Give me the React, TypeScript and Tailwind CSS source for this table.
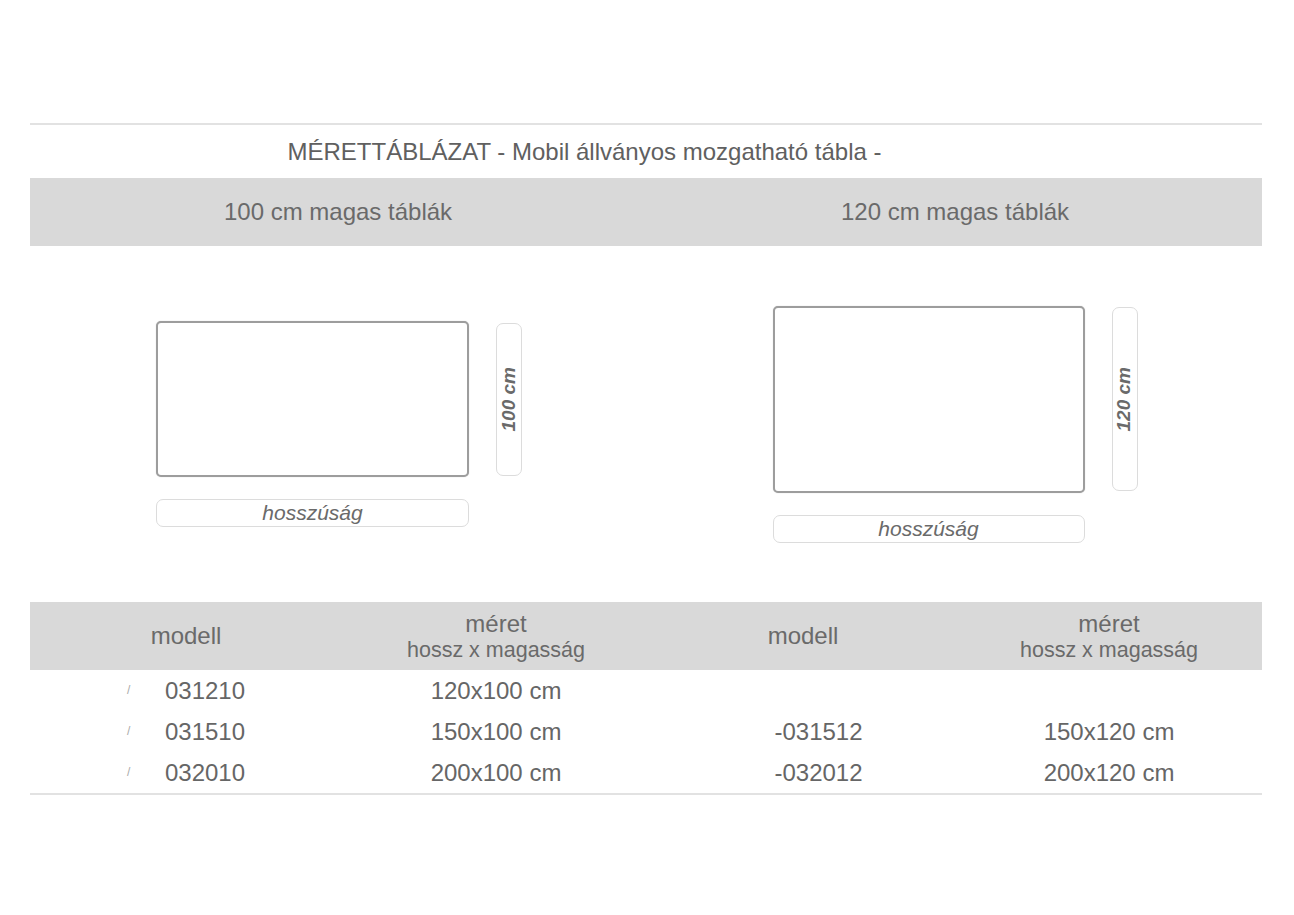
import React from 'react';

const font = "font-['Liberation_Sans',Arial,sans-serif]";

function Board({ w, h, label }: { w: number; h: number; label: string }) {
    return (
        <div className="flex flex-col items-start gap-[22px]">
            <div className="flex items-center gap-[27px]">
                <div
                    className="rounded-[5px] border-2 border-[#9d9d9d] bg-white shadow-[0_0_1px_rgba(0,0,0,0.25)]"
                    style={{ width: w, height: h }}
                />
                <div
                    className="flex w-[26px] items-center justify-center rounded-[7px] border border-[#dcdcdc]"
                    style={{ height: h - 3 }}
                >
                    <span className="rotate-180 text-[19px] font-bold italic text-[#6a6a6a] [writing-mode:vertical-rl]">{label}</span>
                </div>
            </div>
            <div
                className="flex h-[28px] items-center justify-center rounded-[7px] border border-[#dcdcdc] text-[21px] italic text-[#6a6a6a]"
                style={{ width: w }}
            >
                hosszúság
            </div>
        </div>
    );
}

const rows = [
    { a: '031210', b: '120x100 cm', c: '', d: '' },
    { a: '031510', b: '150x100 cm', c: '-031512', d: '150x120 cm' },
    { a: '032010', b: '200x100 cm', c: '-032012', d: '200x120 cm' },
];

export default function App() {
    return (
        <div className={`min-h-[915px] bg-white px-[30px] pt-[123px] text-[#666] ${font}`}>
            <div className="w-[1232px] border-t-2 border-b-2 border-[#e2e2e2]">
                <div className="flex h-[53px] items-center justify-center pr-[8px] text-[24px] text-[#606060]">
                    MÉRETTÁBLÁZAT - Mobil állványos mozgatható tábla - <span className="inline-block w-[115px]" />
                </div>

                <div className="grid h-[68px] grid-cols-2 bg-[#d9d9d9] text-[24px] text-[#6a6a6a]">
                    <div className="flex items-center justify-center">100 cm magas táblák</div>
                    <div className="flex items-center justify-center pl-[2px]">120 cm magas táblák</div>
                </div>

                <div className="grid h-[356px] grid-cols-2">
                    <div className="flex items-center justify-center pl-[2px]">
                        <Board w={313} h={156} label="100 cm" />
                    </div>
                    <div className="flex items-center justify-center pl-[2px]">
                        <Board w={312} h={187} label="120 cm" />
                    </div>
                </div>

                <div className="grid grid-cols-[312px_308px_306px_306px]">
                    <div className="flex h-[68px] items-center justify-center bg-[#d9d9d9] text-[24px] text-[#6a6a6a]">modell</div>
                    <div className="flex h-[68px] flex-col items-center justify-center bg-[#d9d9d9] pt-[2px] text-[#6a6a6a]">
                        <span className="text-[24px] leading-[26px]">méret</span>
                        <span className="text-[21.5px] leading-[26px]">hossz x magasság</span>
                    </div>
                    <div className="flex h-[68px] items-center justify-center bg-[#d9d9d9] text-[24px] text-[#6a6a6a]">modell</div>
                    <div className="flex h-[68px] flex-col items-center justify-center bg-[#d9d9d9] pt-[2px] text-[#6a6a6a]">
                        <span className="text-[24px] leading-[26px]">méret</span>
                        <span className="text-[21.5px] leading-[26px]">hossz x magasság</span>
                    </div>

                    {rows.map((r, i) => (
                        <React.Fragment key={i}>
                            <div className="flex h-[41px] items-center justify-center text-[24px]">
                                <span className="inline-flex w-[38px] items-end pb-[2px] text-[12px] text-[#aaa]">/</span>
                                {r.a}
                            </div>
                            <div className="flex h-[41px] items-center justify-center text-[24px]">{r.b}</div>
                            <div className="flex h-[41px] items-center justify-center text-[24px]">
                                {r.c && <span className="inline-block w-[31px]" />}
                                {r.c}
                            </div>
                            <div className="flex h-[41px] items-center justify-center text-[24px]">{r.d}</div>
                        </React.Fragment>
                    ))}
                </div>
            </div>
        </div>
    );
}
